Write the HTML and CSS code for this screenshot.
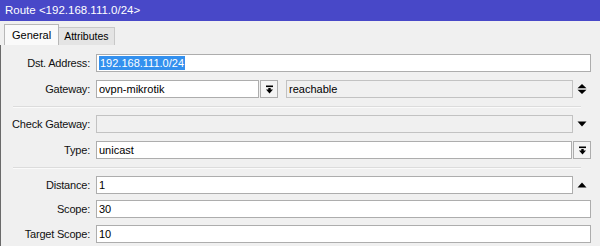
FILE: index.html
```html
<!DOCTYPE html>
<html>
<head>
    <title>Route</title>
    <link rel="stylesheet" href="styles.css">
</head>
    <body>
        <div class="window">
            <div class="titlebar">Route &lt;192.168.111.0/24&gt;</div>
            <div class="tabs">
                <span class="tab active">General</span>
                <span class="tab">Attributes</span>
            </div>
            <div class="panel">
                <div class="group">
                    <div class="row">
                        <label>Dst. Address:</label>
                        <div class="field"><span class="selected">192.168.111.0/24</span></div>
                    </div>
                    <div class="row">
                        <label>Gateway:</label>
                        <div class="field gw">ovpn-mikrotik</div>
                        <span class="btn">
                            <svg width="9" height="9" viewBox="0 0 9 9"><rect x="1" y="0.5" width="7" height="1.6" fill="#000"/><path d="M3.3 3 H5.7 V4.6 H8 L4.5 8.6 L1 4.6 H3.3 Z" fill="#000"/></svg>
                        </span>
                        <div class="field off status">reachable</div>
                        <span class="icon">
                            <svg width="10" height="12" viewBox="0 0 10 12"><path d="M5 1 L9.5 5.2 H0.5 Z M0.5 6.8 H9.5 L5 11 Z" fill="#000"/></svg>
                        </span>
                    </div>
                </div>
                <div class="separator"></div>
                <div class="group">
                    <div class="row">
                        <label>Check Gateway:</label>
                        <div class="field off"></div>
                        <span class="icon">
                            <svg width="10" height="6" viewBox="0 0 10 6"><path d="M0.5 0.5 H9.5 L5 5.5 Z" fill="#000"/></svg>
                        </span>
                    </div>
                    <div class="row">
                        <label>Type:</label>
                        <div class="field">unicast</div>
                        <span class="btn">
                            <svg width="9" height="9" viewBox="0 0 9 9"><rect x="1" y="0.5" width="7" height="1.6" fill="#000"/><path d="M3.3 3 H5.7 V4.6 H8 L4.5 8.6 L1 4.6 H3.3 Z" fill="#000"/></svg>
                        </span>
                    </div>
                </div>
                <div class="separator"></div>
                <div class="group tight">
                    <div class="row">
                        <label>Distance:</label>
                        <div class="field">1</div>
                        <span class="icon">
                            <svg width="10" height="6" viewBox="0 0 10 6"><path d="M5 0.5 L9.5 5.5 H0.5 Z" fill="#000"/></svg>
                        </span>
                    </div>
                    <div class="row">
                        <label>Scope:</label>
                        <div class="field">30</div>
                    </div>
                    <div class="row last">
                        <label>Target Scope:</label>
                        <div class="field">10</div>
                    </div>
                </div>
            </div>
        </div>
    </body>
</html>
```

FILE: styles.css
```css
body {
    margin: 0;
    font-family: "Liberation Sans", Arial, sans-serif;
    font-size: 11px;
    color: #000;
    background: #f0f0f0;
}
.window {
    width: 600px;
    height: 246px;
    overflow: hidden;
}
.titlebar {
    height: 21px;
    line-height: 21px;
    padding-left: 5px;
    background-color: #4848c8;
    color: #fff;
    font-size: 11.5px;
}
.tabs {
    display: flex;
    align-items: flex-end;
    height: 24px;
    padding-left: 4px;
    background: #f0f0f0;
}
.tab {
    height: 17px;
    line-height: 17px;
    padding: 0 5px;
    font-size: 10.5px;
    background: #e4e4e4;
    border: 1px solid #c8c8c8;
    border-bottom: none;
}
.tab.active {
    height: 20px;
    line-height: 20px;
    padding: 0 7px;
    font-size: 11px;
    background: #fafafa;
    border-color: #b8b8b8;
    margin-right: -1px;
    position: relative;
}
.panel {
    height: 201px;
    box-sizing: border-box;
    padding: 9px 9px 0 0;
    border-left: 1px solid #6a6a6a;
    background: #f0f0f0;
}
.group {
    display: flex;
    flex-direction: column;
    gap: 8px;
}
.group.tight {
    gap: 6px;
}
.row {
    display: flex;
    align-items: center;
    height: 18px;
}
.row.last {
    margin-top: 1px;
}
.row label {
    width: 89px;
    flex: none;
    text-align: right;
    margin-right: 6px;
    letter-spacing: -0.2px;
    color: #111;
}
.field {
    flex: 1;
    height: 18px;
    box-sizing: border-box;
    padding: 0 2px;
    line-height: 16px;
    background: #fff;
    border: 1px solid #adadad;
    white-space: nowrap;
}
.field.off {
    background: #f0f0f0;
    border-color: #c2c2c2;
}
.field.gw {
    flex: none;
    width: 163px;
}
.field.status {
    margin-left: 8px;
}
.selected {
    background: #3390ee;
    color: #fff;
    padding: 1px 1px;
}
.btn {
    flex: none;
    width: 18px;
    height: 18px;
    box-sizing: border-box;
    margin-left: 1px;
    border: 1px solid #adadad;
    background: #f4f4f4;
    display: flex;
    align-items: center;
    justify-content: center;
}
.icon {
    flex: none;
    width: 18px;
    display: flex;
    justify-content: center;
    align-items: center;
}
.separator {
    height: 1px;
    margin: 8px 10px 7px 12px;
    background: #dcdcdc;
    border-bottom: 1px solid #fafafa;
}
```
